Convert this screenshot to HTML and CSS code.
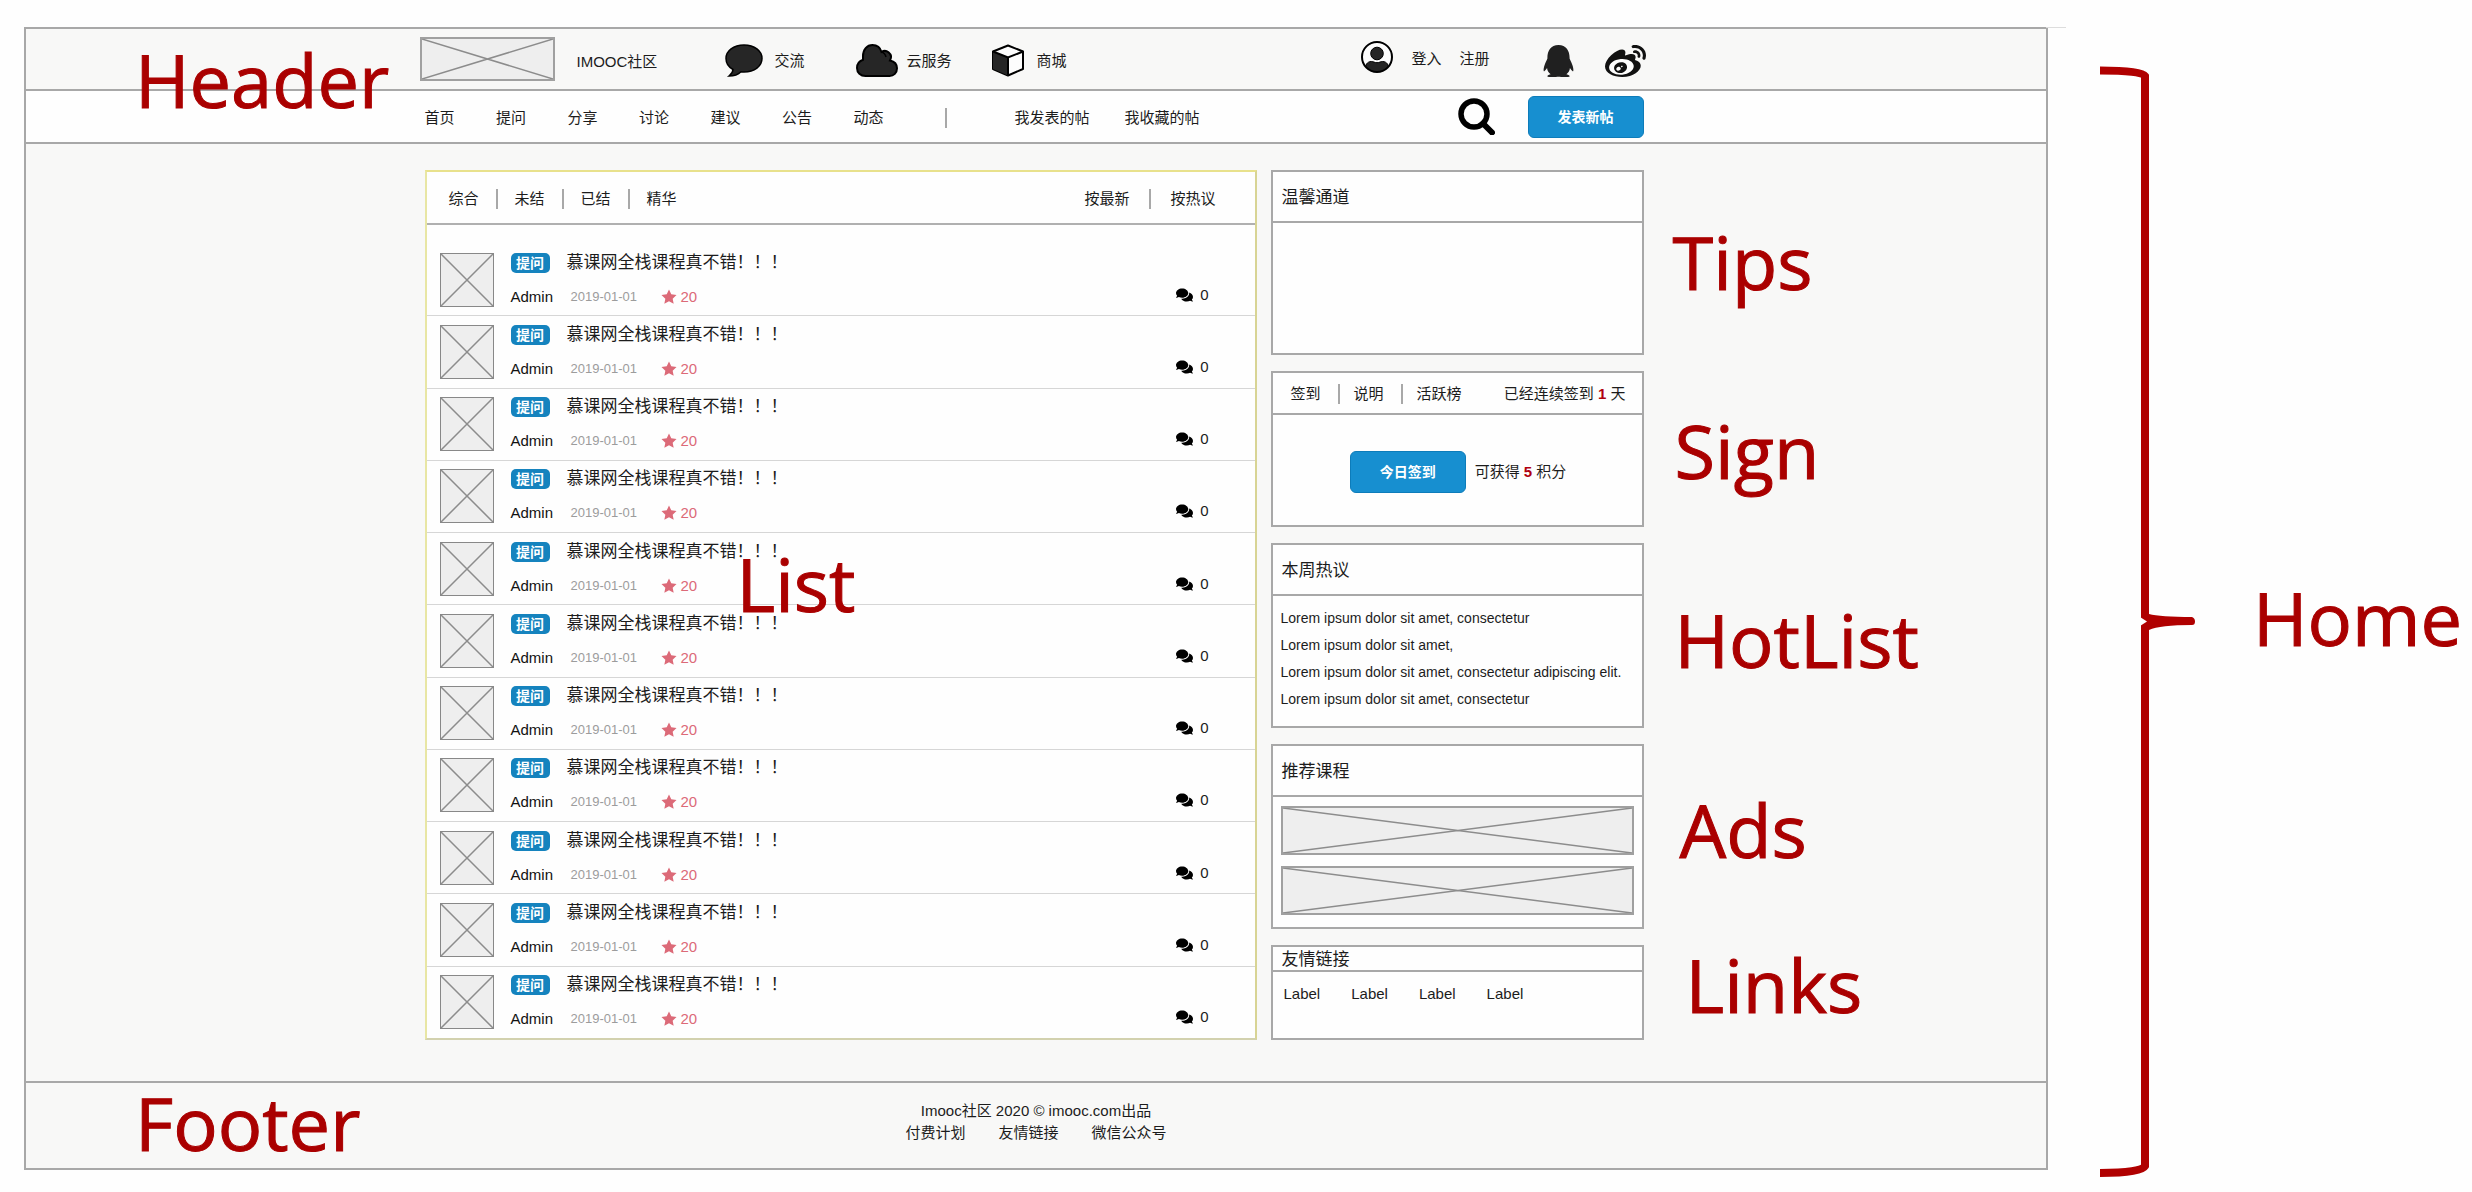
FILE: index.html
```html
<!DOCTYPE html>
<html lang="zh-CN">
<head>
<meta charset="utf-8">
<title>IMOOC社区</title>
<link rel="stylesheet" href="styles.css">
</head>
<body>
<svg class="sprite" aria-hidden="true">
  <symbol id="cross" viewBox="0 0 100 100" preserveAspectRatio="none"><path d="M0 0 100 100M100 0 0 100" fill="none" stroke="#8c8c8c" stroke-width="1.5" vector-effect="non-scaling-stroke"/></symbol>
  <symbol id="star" viewBox="0 0 24 24"><path d="M12 .8l3.4 7.2 7.9 1-5.8 5.5 1.5 7.8-7-3.8-7 3.8 1.500-7.800L.7 9l7.900-1z"/></symbol>
  <symbol id="comments" viewBox="0 32 576 448"><path d="M416 192c0-88.400-93.100-160-208-160S0 103.600 0 192c0 34.300 14.100 65.900 38 92-13.400 30.200-35.500 54.200-35.800 54.500-2.200 2.300-2.800 5.700-1.500 8.700S4.800 352 8 352c36.600 0 66.900-12.300 88.700-25 32.200 15.700 70.300 25 111.300 25 114.900 0 208-71.600 208-160zm122 220c23.900-26 38-57.700 38-92 0-66.900-53.500-124.200-129.300-148.100.9 6.600 1.300 13.300 1.300 20.100 0 105.900-107.700 192-240 192-10.800 0-21.300-.8-31.700-1.900C207.800 439.600 281.800 480 368 480c41 0 79.100-9.200 111.300-25 21.800 12.700 52.100 25 88.700 25 3.200 0 6.100-1.900 7.300-4.800 1.300-2.900.7-6.300-1.500-8.700-.3-.3-22.400-24.200-35.800-54.500z"/></symbol>
</svg>

<div class="stage">
  <div class="frame">
    <header class="header">
      <div class="topbar">
        <div class="wrap topbar-row">
          <svg class="logo cross"><use href="#cross"/></svg>
          <a class="brand" href="#">IMOOC社区</a>
          <a class="entry" href="#">
            <svg class="icon-talk" viewBox="0 0 38 33"><path d="M19 1C8.500 1 1 7 1 14.500c0 5 2.800 8.700 7 11C8 28 6.500 30 4 32c5 0 9.500-1.800 12-4.300 1 .2 2 .3 3 .3 10.500 0 18-6 18-13.500S29.500 1 19 1z" fill="#262626" stroke="#000" stroke-width="1.500"/></svg>
            <span>交流</span>
          </a>
          <a class="entry entry-cloud" href="#">
            <svg class="icon-cloud" viewBox="0 0 42 33"><path d="M9.500 32C4.500 32 1 28.500 1 24c0-4 2.200-6.800 6-8.200V12C7 5.500 11 1 16.500 1c4.300 0 7.800 2.700 9 7 2.300-1.500 5-1.300 7 .3 2.800 2.300 3 5.500 1.500 8.200 4.300 1 7 4 7 7.800 0 4.500-3.300 7.700-7.500 7.700z" fill="#262626" stroke="#000" stroke-width="2"/><path d="M25.500 8Q29 9 30 13" fill="none" stroke="#000" stroke-width="1.500"/></svg>
            <span>云服务</span>
          </a>
          <a class="entry" href="#">
            <svg class="icon-cube" viewBox="0 0 34 33"><path d="M17 1.500 32 7.500V25L17 31.500 2 25V7.500z" fill="#fdfdfd" stroke="#000" stroke-width="2" stroke-linejoin="round"/><path d="M2 7.500 17 13.500v18L2 25z" fill="#262626"/><path d="M2 7.500 17 13.500 32 7.500M17 13.500v18" fill="none" stroke="#000" stroke-width="2"/></svg>
            <span>商城</span>
          </a>
          <div class="account">
            <svg class="icon-user" viewBox="0 0 32 32"><clipPath id="face"><circle cx="16" cy="16" r="15"/></clipPath><circle cx="16" cy="16" r="15" fill="#fdfdfd"/><g clip-path="url(#face)" fill="#262626" stroke="#000"><circle cx="16" cy="12.500" r="6.300"/><path d="M4 30c0-6 2-9.500 6.500-9.500 2 0 3 1.200 5.500 1.200s3.500-1.200 5.500-1.200C26 20.500 28 24 28 30v4H4z"/></g><circle cx="16" cy="16" r="15" fill="none" stroke="#000" stroke-width="2"/></svg>
            <a href="#">登入</a>
            <a href="#">注册</a>
          </div>
          <a class="social" href="#" aria-label="QQ"><svg class="icon-qq" viewBox="0 0 448 512" preserveAspectRatio="none"><path d="M433.754 420.445c-11.526 1.393-44.860-52.741-44.860-52.741 0 31.345-16.136 72.247-51.051 101.786 16.842 5.192 54.843 19.167 45.803 34.421-7.316 12.343-125.510 7.881-159.632 4.037-34.122 3.844-152.316 8.306-159.632-4.037-9.045-15.250 28.918-29.214 45.783-34.415-34.920-29.539-51.059-70.445-51.059-101.792 0 0-33.334 54.134-44.859 52.741-5.370-.65-12.424-29.644 9.347-99.704 10.261-33.024 21.995-60.478 40.144-105.779C60.683 98.063 108.982.006 224 0c113.737.006 163.156 96.133 160.264 214.963 18.118 45.223 29.912 72.850 40.144 105.778 21.768 70.060 14.716 99.053 9.346 99.704z" fill="#202020"/></svg></a>
          <a class="social" href="#" aria-label="微博"><svg class="icon-weibo" viewBox="0 33 512 414" preserveAspectRatio="none"><ellipse cx="205" cy="316" rx="155" ry="102" fill="#fdfdfd"/><path d="M407 177.600c7.600-24-13.400-46.800-37.400-41.700-22 4.800-28.800-28.100-7.100-32.800 50.100-10.900 92.300 37.100 76.500 84.800-6.800 21.200-38.800 10.800-32-10.300zM214.800 446.700C108.500 446.700 0 395.300 0 310.400c0-44.300 28-95.400 76.300-143.700C176 67 279.500 65.800 249.900 161c-4 13.100 12.300 5.700 12.300 6 79.500-33.600 140.500-16.800 114 51.400-3.700 9.400 1.100 10.900 8.300 13.100 135.700 42.300 34.800 215.200-169.700 215.200zm143.700-146.300c-5.400-55.700-78.500-94-163.400-85.700-84.800 8.600-148.800 60.300-143.400 116s78.500 94 163.400 85.700c84.800-8.600 148.800-60.300 143.400-116zM347.900 35.100c-25.900 5.600-16.800 43.700 8.300 38.300 72.300-15.200 134.800 52.800 111.700 124-7.400 24.200 29.100 37 37.400 12 31.900-99.800-55.100-195.900-157.400-174.300zm-78.500 311c-17.100 38.800-66.800 60-109.100 46.300-40.800-13.100-58-53.400-40.300-89.700 17.700-35.400 63.100-55.400 103.400-45.100 42 10.800 63.100 50.200 46 88.500zm-86.300-30c-12.900-5.400-30 .3-38 12.900-8.300 12.900-4.300 28 8.600 34 13.100 6 30.800.3 39.100-12.900 8-13.100 3.700-28.300-9.700-34zm32.600-13.400c-5.100-1.700-11.400.6-14.300 5.400-2.900 5.100-1.400 10.600 3.700 12.900 5.100 2 11.700-.3 14.600-5.400 2.800-5.200 1.100-10.900-4-12.900z" fill="#111"/></svg></a>
        </div>
      </div>
      <nav class="navbar">
        <div class="wrap navbar-row">
          <div class="channels">
            <a href="#">首页</a><a href="#">提问</a><a href="#">分享</a><a href="#">讨论</a><a href="#">建议</a><a href="#">公告</a><a href="#">动态</a>
          </div>
          <div class="mine"><a href="#">我发表的帖</a><a href="#">我收藏的帖</a></div>
          <button class="search" type="button" aria-label="搜索"><svg class="icon-search" viewBox="0 0 37 37"><circle cx="16" cy="16" r="13" fill="none" stroke="#000" stroke-width="5.500"/><path d="M25 25.500 34 34.500" stroke="#000" stroke-width="6" stroke-linecap="round"/></svg></button>
          <button class="primary" type="button">发表新帖</button>
        </div>
      </nav>
      <span class="note note-header">Header</span>
    </header>

    <main class="wrap main">
      <section class="list">
        <div class="list-head">
          <div class="tabs"><a href="#">综合</a><a href="#">未结</a><a href="#">已结</a><a href="#">精华</a></div>
          <div class="tabs"><a href="#">按最新</a><a href="#">按热议</a></div>
        </div>
        <ul class="posts">
          <li class="post"><svg class="avatar cross"><use href="#cross"/></svg><div class="post-text"><div class="post-title"><span class="tag">提问</span><a href="#">慕课网全栈课程真不错！！！</a></div><div class="post-meta"><span class="author">Admin</span><time>2019-01-01</time><span class="score"><svg class="icon-star"><use href="#star"/></svg>20</span></div></div><span class="replies"><svg class="icon-comments"><use href="#comments"/></svg>0</span></li>
          <li class="post"><svg class="avatar cross"><use href="#cross"/></svg><div class="post-text"><div class="post-title"><span class="tag">提问</span><a href="#">慕课网全栈课程真不错！！！</a></div><div class="post-meta"><span class="author">Admin</span><time>2019-01-01</time><span class="score"><svg class="icon-star"><use href="#star"/></svg>20</span></div></div><span class="replies"><svg class="icon-comments"><use href="#comments"/></svg>0</span></li>
          <li class="post"><svg class="avatar cross"><use href="#cross"/></svg><div class="post-text"><div class="post-title"><span class="tag">提问</span><a href="#">慕课网全栈课程真不错！！！</a></div><div class="post-meta"><span class="author">Admin</span><time>2019-01-01</time><span class="score"><svg class="icon-star"><use href="#star"/></svg>20</span></div></div><span class="replies"><svg class="icon-comments"><use href="#comments"/></svg>0</span></li>
          <li class="post"><svg class="avatar cross"><use href="#cross"/></svg><div class="post-text"><div class="post-title"><span class="tag">提问</span><a href="#">慕课网全栈课程真不错！！！</a></div><div class="post-meta"><span class="author">Admin</span><time>2019-01-01</time><span class="score"><svg class="icon-star"><use href="#star"/></svg>20</span></div></div><span class="replies"><svg class="icon-comments"><use href="#comments"/></svg>0</span></li>
          <li class="post"><svg class="avatar cross"><use href="#cross"/></svg><div class="post-text"><div class="post-title"><span class="tag">提问</span><a href="#">慕课网全栈课程真不错！！！</a></div><div class="post-meta"><span class="author">Admin</span><time>2019-01-01</time><span class="score"><svg class="icon-star"><use href="#star"/></svg>20</span></div></div><span class="replies"><svg class="icon-comments"><use href="#comments"/></svg>0</span></li>
          <li class="post"><svg class="avatar cross"><use href="#cross"/></svg><div class="post-text"><div class="post-title"><span class="tag">提问</span><a href="#">慕课网全栈课程真不错！！！</a></div><div class="post-meta"><span class="author">Admin</span><time>2019-01-01</time><span class="score"><svg class="icon-star"><use href="#star"/></svg>20</span></div></div><span class="replies"><svg class="icon-comments"><use href="#comments"/></svg>0</span></li>
          <li class="post"><svg class="avatar cross"><use href="#cross"/></svg><div class="post-text"><div class="post-title"><span class="tag">提问</span><a href="#">慕课网全栈课程真不错！！！</a></div><div class="post-meta"><span class="author">Admin</span><time>2019-01-01</time><span class="score"><svg class="icon-star"><use href="#star"/></svg>20</span></div></div><span class="replies"><svg class="icon-comments"><use href="#comments"/></svg>0</span></li>
          <li class="post"><svg class="avatar cross"><use href="#cross"/></svg><div class="post-text"><div class="post-title"><span class="tag">提问</span><a href="#">慕课网全栈课程真不错！！！</a></div><div class="post-meta"><span class="author">Admin</span><time>2019-01-01</time><span class="score"><svg class="icon-star"><use href="#star"/></svg>20</span></div></div><span class="replies"><svg class="icon-comments"><use href="#comments"/></svg>0</span></li>
          <li class="post"><svg class="avatar cross"><use href="#cross"/></svg><div class="post-text"><div class="post-title"><span class="tag">提问</span><a href="#">慕课网全栈课程真不错！！！</a></div><div class="post-meta"><span class="author">Admin</span><time>2019-01-01</time><span class="score"><svg class="icon-star"><use href="#star"/></svg>20</span></div></div><span class="replies"><svg class="icon-comments"><use href="#comments"/></svg>0</span></li>
          <li class="post"><svg class="avatar cross"><use href="#cross"/></svg><div class="post-text"><div class="post-title"><span class="tag">提问</span><a href="#">慕课网全栈课程真不错！！！</a></div><div class="post-meta"><span class="author">Admin</span><time>2019-01-01</time><span class="score"><svg class="icon-star"><use href="#star"/></svg>20</span></div></div><span class="replies"><svg class="icon-comments"><use href="#comments"/></svg>0</span></li>
          <li class="post"><svg class="avatar cross"><use href="#cross"/></svg><div class="post-text"><div class="post-title"><span class="tag">提问</span><a href="#">慕课网全栈课程真不错！！！</a></div><div class="post-meta"><span class="author">Admin</span><time>2019-01-01</time><span class="score"><svg class="icon-star"><use href="#star"/></svg>20</span></div></div><span class="replies"><svg class="icon-comments"><use href="#comments"/></svg>0</span></li>
        </ul>
        <span class="note note-list">List</span>
      </section>

      <aside class="side">
        <section class="panel">
          <h2 class="panel-head">温馨通道</h2>
          <div class="panel-body"></div>
          <span class="note note-tips">Tips</span>
        </section>
        <section class="panel">
          <div class="panel-head sign-head">
            <div class="tabs tabs-tight"><a href="#">签到</a><a href="#">说明</a><a href="#">活跃榜</a></div>
            <span>已经连续签到 <b class="num">1</b> 天</span>
          </div>
          <div class="panel-body sign-body">
            <button class="primary" type="button">今日签到</button>
            <span>可获得 <b class="num">5</b> 积分</span>
          </div>
          <span class="note note-sign">Sign</span>
        </section>
        <section class="panel">
          <h2 class="panel-head">本周热议</h2>
          <ul class="panel-body hot">
            <li>Lorem ipsum dolor sit amet, consectetur</li>
            <li>Lorem ipsum dolor sit amet,</li>
            <li>Lorem ipsum dolor sit amet, consectetur adipiscing elit.</li>
            <li>Lorem ipsum dolor sit amet, consectetur</li>
          </ul>
          <span class="note note-hot">HotList</span>
        </section>
        <section class="panel">
          <h2 class="panel-head">推荐课程</h2>
          <div class="panel-body ads">
            <svg class="ad cross"><use href="#cross"/></svg>
            <svg class="ad cross"><use href="#cross"/></svg>
          </div>
          <span class="note note-ads">Ads</span>
        </section>
        <section class="panel">
          <h2 class="panel-head links-head">友情链接</h2>
          <div class="panel-body links"><a href="#">Label</a><a href="#">Label</a><a href="#">Label</a><a href="#">Label</a></div>
          <span class="note note-links">Links</span>
        </section>
      </aside>
    </main>

    <footer class="footer">
      <p>Imooc社区 2020 © imooc.com出品</p>
      <div class="footer-links"><a href="#">付费计划</a><a href="#">友情链接</a><a href="#">微信公众号</a></div>
      <span class="note note-footer">Footer</span>
    </footer>
  </div>

  <div class="outline">
    <svg class="bracket" viewBox="0 0 96 1112" preserveAspectRatio="none"><path d="M0 4.500Q41 4.500 45 10V612M45 500V1100Q41 1107 0 1107" fill="none" stroke="#b00000" stroke-width="8"/><path d="M41 548 49 548Q60 551 92 551Q95 552 95 555.500Q95 559 92 559Q60 559 49 564L41 564 41 560 48 556 41 552z" fill="#b00000"/><path d="M40 551 47 555.500 40 560z" fill="#fefefe"/></svg>
    <span class="note-home">Home</span>
  </div>
</div>
</body>
</html>
```

FILE: styles.css
```css
* { box-sizing: border-box; }

:root {
  --line: #a8a8a8;
  --paper: #fefefe;
  --blue: #178fd0;
  --red: #aa0000;
}

body {
  margin: 0;
  background: var(--paper);
  color: #1c1c1c;
  font: 15px/20px "Liberation Sans", "Noto Sans CJK SC", sans-serif;
}

a { color: inherit; text-decoration: none; white-space: nowrap; }
ul { list-style: none; margin: 0; padding: 0; }
p, h2 { margin: 0; }
svg { display: block; flex: none; }
.sprite { position: absolute; width: 0; height: 0; }

.stage {
  display: grid;
  grid-template-columns: minmax(0, 1fr) 424px;
  padding: 27px 0 14px 24px;
}

.frame {
  position: relative;
  margin-bottom: 8px;
  border: 2px solid var(--line);
  background: #f8f8f7;
}

.frame::after {
  content: "";
  position: absolute;
  top: -2px;
  left: 100%;
  width: 20px;
  height: 1px;
  background: #ddd;
}

.wrap {
  width: 1223px;
  max-width: 100%;
  margin: 0 auto;
  padding-right: 4px;
}

.cross { border: 2px solid #a0a0a0; background: #eee; }

/* Header */
.header { position: relative; }
.topbar { height: 62px; border-bottom: 2px solid var(--line); }
.topbar-row { display: flex; align-items: center; height: 100%; }
.logo { width: 135px; height: 44px; margin-left: -5px; }
.brand { width: 170px; padding: 6px 0 0 22px; }
.entry { display: flex; align-items: center; gap: 12px; margin-right: 51px; padding-top: 3px; }
.entry-cloud { gap: 9px; margin-right: 39px; }
.icon-talk { width: 38px; height: 33px; }
.icon-cloud { width: 42px; height: 33px; }
.icon-cube { width: 34px; height: 33px; }
.account { display: flex; align-items: center; gap: 18px; margin-left: auto; padding-bottom: 5px; }
.account a { padding-top: 4px; }
.icon-user { width: 32px; height: 32px; }
.social { padding-top: 3px; }
.icon-qq { width: 31px; height: 32px; margin: 0 31px 0 53px; }
.icon-weibo { width: 41px; height: 32px; margin-right: -2px; }

.navbar { height: 53px; border-bottom: 2px solid var(--line); background: var(--paper); }
.navbar-row { display: flex; align-items: center; height: 100%; }
.channels { display: flex; justify-content: space-between; width: 459px; padding-top: 3px; }
.mine { display: flex; gap: 35px; margin-left: 61px; padding: 3px 0 0 70px; background: linear-gradient(var(--line), var(--line)) left bottom / 2px 20px no-repeat; }
.search { margin: 0 33px 0 auto; padding: 0; border: 0; background: none; }
.icon-search { width: 37px; height: 37px; }

.primary {
  width: 116px;
  height: 42px;
  padding: 0;
  border: 1px solid #0d7cba;
  border-radius: 6px;
  background: var(--blue);
  color: #fff;
  font: bold 14px/20px "Liberation Sans", "Noto Sans CJK SC", sans-serif;
}

/* Main columns */
.main {
  display: grid;
  grid-template-columns: minmax(0, 1fr) 373px;
  gap: 14px;
  padding-top: 26px;
  padding-bottom: 41px;
}

.list {
  position: relative;
  display: flex;
  flex-direction: column;
  border: 2px solid;
  border-color: #e8e18c #d8d494 #d2d1ae #e8e6a4;
  background: var(--paper);
}

.list-head {
  display: flex;
  justify-content: space-between;
  align-items: center;
  height: 53px;
  padding: 2px 39px 0 22px;
  border-bottom: 2px solid #b0b0b0;
}

.tabs { display: flex; }
.tabs a + a { margin-left: 17px; padding-left: 17px; border-left: 2px solid var(--line); }
.tabs:last-child a + a { margin-left: 20px; padding-left: 19px; }

.posts { display: flex; flex: 1; flex-direction: column; padding-top: 19px; }
.post {
  display: flex;
  flex: 1;
  align-items: center;
  padding: 0 46px 0 13px;
  border-bottom: 1px solid #d6d6d6;
}
.post:last-child { border-bottom: 0; }
.avatar { width: 54px; height: 54px; border-width: 1px; border-color: #888; }
.post-text { display: flex; flex: 1; flex-direction: column; gap: 14px; margin-left: 17px; }
.post-title { display: flex; align-items: center; gap: 17px; font-size: 17px; }
.tag {
  width: 39px;
  border-radius: 5px;
  background: #1583be;
  color: #fff;
  font-size: 14px;
  font-weight: bold;
  text-align: center;
}
.post-meta { display: flex; align-items: center; }
.author { width: 60px; color: #111; }
time { width: 90px; color: #9c9c9c; font-size: 13px; }
.score { display: flex; align-items: center; gap: 4px; color: #dc6a78; }
.icon-star { width: 16px; height: 16px; fill: #dc6a78; }
.replies { display: flex; align-items: center; gap: 7px; margin-top: 30px; }
.icon-comments { width: 17px; height: 14px; fill: #000; }

/* Sidebar */
.side { display: flex; flex-direction: column; gap: 16px; }
.panel { position: relative; border: 2px solid var(--line); background: var(--paper); }
.panel-head {
  display: flex;
  align-items: center;
  height: 51px;
  padding: 3px 0 0 9px;
  border-bottom: 2px solid var(--line);
  font-size: 17px;
  font-weight: normal;
}
.panel-body { min-height: 130px; }
.sign-head { justify-content: space-between; height: 42px; padding: 2px 16px 0 18px; font-size: 15px; }
.tabs.tabs-tight a + a { margin-left: 17px; padding-left: 14px; }
.num { color: #b00010; }
.sign-body { display: flex; justify-content: center; align-items: center; gap: 9px; min-height: 110px; padding: 3px 0 0 2px; }
.hot { padding: 9px 8px; font-size: 14px; line-height: 27px; }
.ads { display: flex; flex-direction: column; gap: 11px; padding: 9px 8px; }
.ad { width: 100%; height: 49px; }
.hot, .ads { height: 130px; }
.links-head { height: 25px; }
.links { display: flex; gap: 31px; min-height: 66px; padding: 12px 11px; }

/* Footer */
.footer {
  position: relative;
  display: flex;
  flex-direction: column;
  align-items: center;
  gap: 2px;
  height: 85px;
  padding-top: 18px;
  border-top: 2px solid var(--line);
}
.footer-links { display: flex; gap: 33px; }

/* Annotations */
.note, .note-home {
  color: var(--red);
  font: 74px/74px "Open Sans", "Noto Sans", sans-serif;
  -webkit-text-stroke: 1px var(--red);
  white-space: nowrap;
}
.note { position: absolute; }
.note-header { top: 14px; left: 109px; }
.note-footer { top: 3px; left: 109px; }
.note-list { top: 375px; left: 310px; }
.note-tips { top: 53px; left: 400px; }
.note-sign { top: 41px; left: 402px; }
.note-hot { top: 58px; left: 402px; }
.note-ads { top: 47px; left: 407px; }
.note-links { top: 1px; left: 413px; }

.outline { display: flex; align-items: center; padding: 39px 0 0 52px; }
.bracket { width: 96px; height: 100%; }
.note-home { margin: 0 0 9px 57px; }
```
